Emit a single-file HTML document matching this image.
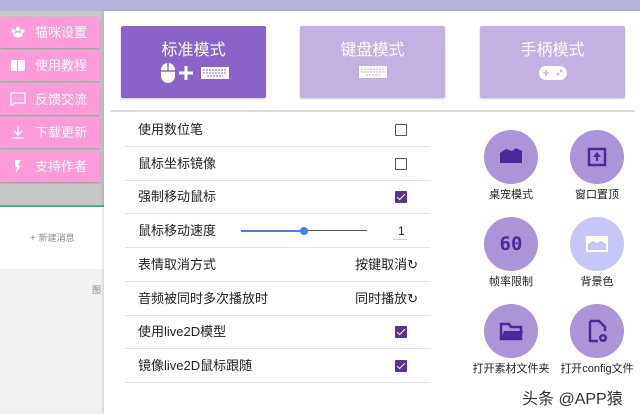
<!DOCTYPE html>
<html><head><meta charset="utf-8"><style>
*{margin:0;padding:0;box-sizing:border-box}
body{width:640px;height:414px;overflow:hidden;position:relative;background:#fff;font-family:"Liberation Sans","Noto Sans CJK SC",sans-serif}
.abs{position:absolute}
.top{left:0;top:0;width:640px;height:11px;background:#b3b3dc}
.bg1{left:0;top:11px;width:104px;height:195px;background:#c8c8c8}
.green{left:0;top:205px;width:104px;height:2px;background:#3cb878}
.bg2{left:0;top:207px;width:104px;height:62px;background:#fff}
.bg3{left:0;top:269px;width:104px;height:145px;background:#f1f1f1}
.pb{left:0;width:100px;height:31px;background:#ff9bd8;color:#fff;font-size:13px;line-height:31px;padding-left:35px;box-shadow:0 1px 2px rgba(0,0,0,.25)}
.pb svg{position:absolute;left:10px;top:8px}
.panel{left:104px;top:11px;width:536px;height:403px;background:#fff;box-shadow:-1px 0 3px rgba(0,0,0,.15)}
.mode{top:26px;width:145px;height:72px;border-radius:2px;color:#fff;font-size:16px;text-align:center;padding-top:10px;box-shadow:0 1px 2px rgba(0,0,0,.2)}
.row{left:125px;width:305px;height:34px;border-bottom:1px solid #e2e2e2;font-size:13px;color:#222;line-height:34px;padding-left:13px}
.cb{position:absolute;left:270px;top:11px;width:12px;height:12px;border:1px solid #555;border-radius:1px;background:#fff}
.cb.on{background:#5a3296;border-color:#5a3296}
.cb.on:after{content:"";position:absolute;left:3px;top:0px;width:3px;height:7px;border:solid #fff;border-width:0 1.5px 1.5px 0;transform:rotate(45deg)}
.rt{position:absolute;right:12px;top:0;font-size:13px}
.c{width:54px;height:54px;border-radius:50%;background:#ac94d8}
.lab{font-size:11px;color:#222;width:90px;text-align:center}
</style></head><body>
<div class="abs" style="left:4px;top:4px;font-size:12px;color:#333">大 日</div>
<div class="abs top"></div>
<div class="abs bg1"></div><div class="abs green"></div><div class="abs bg2"></div><div class="abs bg3"></div>
<div class="abs" style="left:30px;top:231px;font-size:10px;color:#888">+ <span style="font-size:9px">新建消息</span></div>
<div class="abs" style="left:92px;top:283px;font-size:9px;color:#888">图</div>

<div class="abs pb" style="top:17px"><svg width="16" height="14"><circle cx="8" cy="4" r="2.2" fill="#fff"/><circle cx="3.5" cy="6" r="2" fill="#fff"/><circle cx="12.5" cy="6" r="2" fill="#fff"/><ellipse cx="8" cy="10" rx="5" ry="2.5" fill="#fff"/></svg>猫咪设置</div>
<div class="abs pb" style="top:50px"><svg width="16" height="14"><path d="M1 2h6v11H1zM8 2h7v11H8z" fill="#fff"/></svg>使用教程</div>
<div class="abs pb" style="top:84px"><svg width="16" height="14"><path d="M1 1h14v10H5l-4 3z" fill="none" stroke="#fff" stroke-width="1.3"/><path d="M5 6h1M8 6h1M11 6h1" stroke="#fff" stroke-width="1.3"/></svg>反馈交流</div>
<div class="abs pb" style="top:117px"><svg width="16" height="14"><path d="M8 1v9M4 6l4 4 4-4M2 13h12" fill="none" stroke="#fff" stroke-width="1.3"/></svg>下载更新</div>
<div class="abs pb" style="top:151px"><svg width="16" height="14"><path d="M5 1h6L8 6h3l-5 8 1-6H5z" fill="#fff"/></svg>支持作者</div>

<div class="abs panel"></div>
<div class="abs mode" style="left:121px;background:#8a63c8">标准模式<div style="font-size:20px;margin-top:2px;letter-spacing:2px">
<svg width="70" height="22" viewBox="0 0 70 22"><rect x="2" y="1" width="14" height="20" rx="7" fill="#fff"/><line x1="9" y1="1" x2="9" y2="9" stroke="#8a63c8" stroke-width="1.5"/><line x1="2" y1="9" x2="16" y2="9" stroke="#8a63c8" stroke-width="1.5"/><path d="M27 4v14M20 11h14" stroke="#fff" stroke-width="3"/><rect x="42" y="5" width="28" height="12" fill="#fff"/><path d="M44 8h24M44 11h24M48 14h16" stroke="#8a63c8" stroke-width="1" stroke-dasharray="2 1"/></svg></div></div>
<div class="abs mode" style="left:300px;background:#c3b2e1">键盘模式<div style="margin-top:4px"><svg width="30" height="16"><rect x="1" y="2" width="28" height="12" fill="#fff"/><path d="M3 5h24M3 8h24M8 11h14" stroke="#c3b2e1" stroke-width="1" stroke-dasharray="2 1"/></svg></div></div>
<div class="abs mode" style="left:480px;background:#c3b2e1">手柄模式<div style="margin-top:4px"><svg width="30" height="18"><rect x="1" y="2" width="28" height="14" rx="7" fill="#fff"/><path d="M8 6v6M5 9h6" stroke="#c3b2e1" stroke-width="1.5"/><circle cx="20" cy="10" r="1.3" fill="#c3b2e1"/><circle cx="23" cy="7" r="1.3" fill="#c3b2e1"/></svg></div></div>
<div class="abs" style="left:110px;top:110px;width:525px;height:2px;background:#ddd"></div>

<div class="abs row" style="top:113px">使用数位笔<span class="cb"></span></div>
<div class="abs row" style="top:147px">鼠标坐标镜像<span class="cb"></span></div>
<div class="abs row" style="top:180px">强制移动鼠标<span class="cb on"></span></div>
<div class="abs row" style="top:214px">鼠标移动速度
<span style="position:absolute;left:116px;top:16px;width:63px;height:2px;background:#3b82f0"></span>
<span style="position:absolute;left:179px;top:16px;width:63px;height:1px;background:#555"></span>
<span style="position:absolute;left:175px;top:13px;width:8px;height:8px;border-radius:50%;background:#3b82f0"></span>
<span style="position:absolute;left:273px;top:0;font-size:12px">1</span>
<span style="position:absolute;left:268px;top:25px;width:14px;height:1px;background:#ccc"></span></div>
<div class="abs row" style="top:248px">表情取消方式<span class="rt">按键取消↻</span></div>
<div class="abs row" style="top:282px">音频被同时多次播放时<span class="rt">同时播放↻</span></div>
<div class="abs row" style="top:315px">使用live2D模型<span class="cb on"></span></div>
<div class="abs row" style="top:349px">镜像live2D鼠标跟随<span class="cb on"></span></div>

<div class="abs c" style="left:484px;top:130px"><svg width="54" height="54"><path d="M16 33V23l6-4 6 2 4-3 6 3v12z" fill="#4a2a9a"/></svg></div>
<div class="abs c" style="left:570px;top:130px"><svg width="54" height="54"><rect x="19" y="19" width="16" height="16" fill="none" stroke="#4a2a9a" stroke-width="2.5"/><path d="M27 22l-4 5h3v4h2v-4h3z" fill="#4a2a9a"/></svg></div>
<div class="abs lab" style="left:466px;top:186px">桌宠模式</div>
<div class="abs lab" style="left:552px;top:186px">窗口置顶</div>
<div class="abs c" style="left:484px;top:217px"><div style="text-align:center;line-height:54px;font-size:19px;font-weight:bold;color:#4a2a9a;font-family:'DejaVu Sans Mono',monospace">60</div></div>
<div class="abs c" style="left:570px;top:217px;background:#c6c6f8"><svg width="54" height="54"><rect x="16" y="19" width="22" height="16" fill="#fff"/><path d="M18 33v-6l5-3 4 2 4-2 5 3v6z" fill="#c6c6f8"/></svg></div>
<div class="abs lab" style="left:466px;top:273px">帧率限制</div>
<div class="abs lab" style="left:552px;top:273px">背景色</div>
<div class="abs c" style="left:484px;top:304px"><svg width="54" height="54"><path d="M17 20h8l2 3h10v12H17z" fill="none" stroke="#4a2a9a" stroke-width="2.5"/><path d="M17 35l3-8h19l-2 8z" fill="#4a2a9a"/></svg></div>
<div class="abs c" style="left:570px;top:304px"><svg width="54" height="54"><path d="M20 17h9l6 6v4M28 37h-8V17" fill="none" stroke="#4a2a9a" stroke-width="2.5"/><circle cx="33" cy="34" r="4" fill="#4a2a9a"/><circle cx="33" cy="34" r="1.5" fill="#ac94d8"/></svg></div>
<div class="abs lab" style="left:466px;top:360px">打开素材文件夹</div>
<div class="abs lab" style="left:552px;top:360px">打开config文件</div>
<div class="abs" style="left:522px;top:385px;font-size:16px;color:#333">头条 @APP猿</div>
</body></html>
